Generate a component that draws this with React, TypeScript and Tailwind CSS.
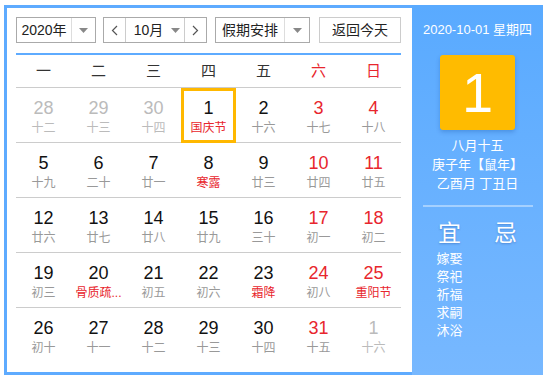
import React from 'react'

type Day = { n: number; l: string; dim?: boolean; red?: boolean; fest?: boolean; today?: boolean }

const weeks: Day[][] = [
    [
        { n: 28, l: '十二', dim: true },
        { n: 29, l: '十三', dim: true },
        { n: 30, l: '十四', dim: true },
        { n: 1, l: '国庆节', fest: true, today: true },
        { n: 2, l: '十六' },
        { n: 3, l: '十七', red: true },
        { n: 4, l: '十八', red: true },
    ],
    [
        { n: 5, l: '十九' },
        { n: 6, l: '二十' },
        { n: 7, l: '廿一' },
        { n: 8, l: '寒露', fest: true },
        { n: 9, l: '廿三' },
        { n: 10, l: '廿四', red: true },
        { n: 11, l: '廿五', red: true },
    ],
    [
        { n: 12, l: '廿六' },
        { n: 13, l: '廿七' },
        { n: 14, l: '廿八' },
        { n: 15, l: '廿九' },
        { n: 16, l: '三十' },
        { n: 17, l: '初一', red: true },
        { n: 18, l: '初二', red: true },
    ],
    [
        { n: 19, l: '初三' },
        { n: 20, l: '骨质疏...', fest: true },
        { n: 21, l: '初五' },
        { n: 22, l: '初六' },
        { n: 23, l: '霜降', fest: true },
        { n: 24, l: '初八', red: true },
        { n: 25, l: '重阳节', red: true, fest: true },
    ],
    [
        { n: 26, l: '初十' },
        { n: 27, l: '十一' },
        { n: 28, l: '十二' },
        { n: 29, l: '十三' },
        { n: 30, l: '十四' },
        { n: 31, l: '十五', red: true },
        { n: 1, l: '十六', dim: true },
    ],
]

const heads = ['一', '二', '三', '四', '五', '六', '日']

const Caret = () => (
    <svg width="9" height="5" viewBox="0 0 9 5"><path d="M0 0h9L4.5 5z" fill="#888" /></svg>
)

const Chevron = ({ dir }: { dir: 'l' | 'r' }) => (
    <svg width="7" height="11" viewBox="0 0 7 11">
        <path d={dir === 'l' ? 'M6 1L1.5 5.5 6 10' : 'M1 1l4.5 4.5L1 10'} stroke="#555" strokeWidth="1.2" fill="none" />
    </svg>
)

const App = () => {
    return (
        <div className="w-[547px] h-[380px] bg-white pt-[5px] pl-[4px] text-[#222]" style={{ fontFamily: '"Liberation Sans", "Noto Sans CJK SC", sans-serif' }}>
            <div className="flex w-[539px] h-[370px]">
                {/* Left: calendar */}
                <div className="w-[408px] border-l-[3px] border-t-[3px] border-b-[3px] border-[#5eabff] pl-[9px] pr-[11px] pt-[9px]">
                    {/* Controls */}
                    <div className="flex items-center h-[26px] text-[14px]">
                        <div className="flex h-[26px] w-[80px] border border-[#aaa]">
                            <div className="flex-1 flex items-center justify-center">2020年</div>
                            <div className="w-[24px] border-l border-[#ddd] flex items-center justify-center"><Caret /></div>
                        </div>
                        <div className="flex h-[26px] w-[104px] ml-[7px] border border-[#aaa]">
                            <div className="w-[22px] border-r border-[#ccc] flex items-center justify-center"><Chevron dir="l" /></div>
                            <div className="flex-1 flex items-center justify-center gap-[8px] pl-[4px]">
                                <span>10月</span><Caret />
                            </div>
                            <div className="w-[22px] border-l border-[#ccc] flex items-center justify-center"><Chevron dir="r" /></div>
                        </div>
                        <div className="flex h-[26px] w-[95px] ml-[8px] border border-[#aaa]">
                            <div className="flex-1 flex items-center justify-center">假期安排</div>
                            <div className="w-[25px] border-l border-[#ddd] flex items-center justify-center"><Caret /></div>
                        </div>
                        <div className="flex h-[26px] w-[82px] ml-[9px] border border-[#ccc] items-center justify-center">返回今天</div>
                    </div>

                    <div className="mt-[10px] h-[2px] bg-[#5eabff]" />

                    {/* Week header */}
                    <div className="grid grid-cols-7 h-[33px] border-b border-[#ccc] text-[15px]">
                        {heads.map((h, i) => (
                            <div key={h} className={`flex items-center justify-center ${i >= 5 ? 'text-[#e8262d]' : 'text-[#333]'}`}>{h}</div>
                        ))}
                    </div>

                    {/* Days */}
                    {weeks.map((w, wi) => (
                        <div key={wi} className={`grid grid-cols-7 h-[55px] ${wi < 4 ? 'border-b border-[#ccc]' : ''}`}>
                            {w.map((d, di) => (
                                <div
                                    key={di}
                                    className={`flex flex-col items-center pt-[10px] ${d.today ? 'shadow-[inset_0_0_0_3px_#ffb800] h-[55px]' : ''}`}
                                >
                                    <div className={`text-[18px] leading-[20px] ${d.dim ? 'text-[#bbb]' : d.red ? 'text-[#e8262d]' : 'text-[#111]'}`}>{d.n}</div>
                                    <div className={`text-[12px] leading-[17px] mt-[2px] whitespace-nowrap ${d.dim ? 'text-[#bbb]' : d.fest ? 'text-[#e8262d]' : 'text-[#999]'}`}>{d.l}</div>
                                </div>
                            ))}
                        </div>
                    ))}
                </div>

                {/* Right: detail panel */}
                <div className="w-[131px] h-[370px] bg-gradient-to-b from-[#59aaff] to-[#77b8ff] text-white flex flex-col items-center pt-[17px] text-[13px]">
                    <div className="leading-[16px]">2020-10-01 星期四</div>
                    <div className="mt-[17px] w-[75px] h-[75px] rounded-[3px] bg-[#ffbb00] shadow-[0_2px_4px_rgba(0,60,140,0.25)] flex items-center justify-center text-[56px] leading-none">1</div>
                    <div className="mt-[6px] leading-[19px] text-center">
                        <div>八月十五</div>
                        <div>庚子年【鼠年】</div>
                        <div>乙酉月 丁丑日</div>
                    </div>
                    <div className="mt-[12px] w-[110px] h-[2px] bg-white/40" />
                    <div className="flex w-[112px] mt-[14px]">
                        <div className="flex-1 flex flex-col items-center">
                            <div className="text-[23px] leading-[24px] [text-shadow:0_1px_2px_rgba(0,40,120,0.3)]">宜</div>
                            <div className="mt-[5px] leading-[18px]">
                                <div>嫁娶</div>
                                <div>祭祀</div>
                                <div>祈福</div>
                                <div>求嗣</div>
                                <div>沐浴</div>
                            </div>
                        </div>
                        <div className="flex-1 flex flex-col items-center">
                            <div className="text-[23px] leading-[24px] [text-shadow:0_1px_2px_rgba(0,40,120,0.3)]">忌</div>
                        </div>
                    </div>
                </div>
            </div>
        </div>
    )
}

export default App
